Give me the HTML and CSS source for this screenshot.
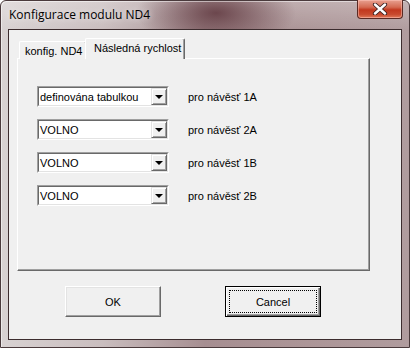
FILE: index.html
```html
<!DOCTYPE html>
<html>
<head>
<meta charset="utf-8">
<link rel="stylesheet" href="styles.css">
</head>
<body>
<div class="window">
  <div class="titlebar">
    <span class="title">Konfigurace modulu ND4</span>
    <div class="close">
      <svg width="16" height="12" viewBox="0 0 16 12">
        <path d="M3 1.5 L13 10.5 M13 1.5 L3 10.5" stroke="#3a2020" stroke-width="4.2" stroke-linecap="round"/>
        <path d="M3 1.5 L13 10.5 M13 1.5 L3 10.5" stroke="#ffffff" stroke-width="2.4" stroke-linecap="round"/>
      </svg>
    </div>
  </div>
  <div class="client">
    <div class="tabs">
      <div class="tab">konfig. ND4</div>
      <div class="tab active">Následná rychlost</div>
    </div>
    <div class="panel">
      <div class="row">
        <div class="combo"><div class="combo-in"><span class="value">definována tabulkou</span><span class="drop"><span class="arrow"></span></span></div></div>
        <span class="label">pro návěsť 1A</span>
      </div>
      <div class="row">
        <div class="combo"><div class="combo-in"><span class="value">VOLNO</span><span class="drop"><span class="arrow"></span></span></div></div>
        <span class="label">pro návěsť 2A</span>
      </div>
      <div class="row">
        <div class="combo"><div class="combo-in"><span class="value">VOLNO</span><span class="drop"><span class="arrow"></span></span></div></div>
        <span class="label">pro návěsť 1B</span>
      </div>
      <div class="row">
        <div class="combo"><div class="combo-in"><span class="value">VOLNO</span><span class="drop"><span class="arrow"></span></span></div></div>
        <span class="label">pro návěsť 2B</span>
      </div>
    </div>
    <div class="buttons">
      <div class="btn"><span class="btn-text">OK</span></div>
      <div class="btn default"><span class="btn-text focus">Cancel</span></div>
    </div>
  </div>
</div>
</body>
</html>
```

FILE: styles.css
```css
html, body {
  margin: 0;
  padding: 0;
}
body {
  width: 410px;
  height: 348px;
  overflow: hidden;
  background: #ffffff;
}
.window {
  width: 410px;
  height: 348px;
  box-sizing: border-box;
  padding: 0 7px 7px 7px;
  display: flex;
  flex-direction: column;
  border: 1px solid #4a3a3c;
  border-radius: 6px 6px 0 0;
  background:
    radial-gradient(ellipse 80px 36px at 215px 12px, rgba(95,55,62,0.85), rgba(95,55,62,0) 100%),
    linear-gradient(180deg, rgba(255,255,255,0.25) 0px, rgba(255,255,255,0) 30px),
    linear-gradient(90deg, #d8d2d2 0%, #c9bdbe 25%, #a68e91 50%, #ac9597 75%, #b09c9e 100%);
  box-shadow: inset 1px 1px 0 rgba(255,255,255,0.5);
  position: relative;
}
.titlebar {
  height: 28px;
  flex: none;
  display: flex;
  align-items: flex-start;
  position: relative;
}
.title {
  font-family: "Open Sans", "Noto Sans", sans-serif;
  font-size: 12px;
  color: #000;
  margin-top: 5px;
  margin-left: 1px;
  text-shadow: 0 0 6px rgba(255,255,255,0.8);
}
.close {
  position: absolute;
  right: -1px;
  top: -1px;
  width: 46px;
  height: 19px;
  box-sizing: border-box;
  border: 1px solid #5a2a24;
  border-top: none;
  border-radius: 0 0 4px 4px;
  background: linear-gradient(180deg, #e8a090 0%, #d46a52 40%, #c2381e 55%, #c84a2e 80%, #e07a5a 100%);
  box-shadow: inset 0 0 0 1px rgba(255,200,190,0.5);
  display: flex;
  align-items: center;
  justify-content: center;
}
.client {
  flex: 1;
  border: 1px solid #3c2c2e;
  background: #f0f0f0;
  display: flex;
  flex-direction: column;
  padding: 8px 0 0 8px;
  font-family: "Liberation Sans", Arial, sans-serif;
  font-size: 11px;
  color: #000;
}
.tabs {
  display: flex;
  align-items: flex-end;
  height: 21px;
  padding-left: 2px;
  position: relative;
  z-index: 2;
  margin-bottom: -1px;
}
.tab {
  height: 18px;
  box-sizing: border-box;
  padding: 3px 6px 0 5px;
  border-top: 1px solid #ffffff;
  border-left: 1px solid #ffffff;
  border-right: 1px solid #696969;
  box-shadow: inset -1px 0 0 #a0a0a0;
  border-radius: 2px 2px 0 0;
  background: #f0f0f0;
  white-space: nowrap;
  width: 68px;
}
.tab.active {
  height: 21px;
  width: 100px;
  margin-left: -2px;
  padding: 3px 6px 0 8px;
}
.panel {
  width: 353px;
  height: 213px;
  box-sizing: border-box;
  border-top: 1px solid #ffffff;
  border-left: 1px solid #ffffff;
  border-right: 1px solid #696969;
  border-bottom: 1px solid #696969;
  box-shadow: inset -1px -1px 0 #a0a0a0;
  padding: 27px 0 0 19px;
  display: flex;
  flex-direction: column;
  gap: 12px;
}
.row {
  display: flex;
  align-items: center;
  height: 21px;
}
.combo {
  width: 132px;
  height: 21px;
  box-sizing: border-box;
  border: 1px solid;
  border-color: #a0a0a0 #ffffff #ffffff #a0a0a0;
}
.combo-in {
  height: 100%;
  box-sizing: border-box;
  border: 1px solid;
  border-color: #696969 #e3e3e3 #e3e3e3 #696969;
  background: #ffffff;
  display: flex;
  align-items: center;
}
.value {
  flex: 1;
  padding-left: 1px;
  white-space: nowrap;
  overflow: hidden;
}
.drop {
  width: 16px;
  height: 17px;
  box-sizing: border-box;
  border: 1px solid;
  border-color: #e3e3e3 #696969 #696969 #e3e3e3;
  box-shadow: inset 1px 1px 0 #ffffff, inset -1px -1px 0 #a0a0a0;
  background: #f0f0f0;
  display: flex;
  align-items: center;
  justify-content: center;
}
.arrow {
  width: 0;
  height: 0;
  border-left: 4px solid transparent;
  border-right: 4px solid transparent;
  border-top: 4px solid #000;
  margin-top: 1px;
}
.label {
  margin-left: 19px;
}
.buttons {
  display: flex;
  gap: 64px;
  padding: 15px 0 0 48px;
}
.btn {
  width: 96px;
  height: 31px;
  box-sizing: border-box;
  border: 1px solid;
  border-color: #ffffff #696969 #696969 #ffffff;
  box-shadow: inset -1px -1px 0 #a0a0a0, inset 1px 1px 0 #e3e3e3;
  background: #f0f0f0;
  display: flex;
  align-items: center;
  justify-content: center;
  padding: 3px;
}
.btn.default {
  border: 1px solid #000000;
  box-shadow: inset 1px 1px 0 #ffffff, inset -1px -1px 0 #696969, inset -2px -2px 0 #a0a0a0;
}
.btn-text {
  display: flex;
  align-items: center;
  justify-content: center;
}
.btn-text.focus {
  width: 100%;
  height: 100%;
  box-sizing: border-box;
  border: 1px dotted #000;
}
```
